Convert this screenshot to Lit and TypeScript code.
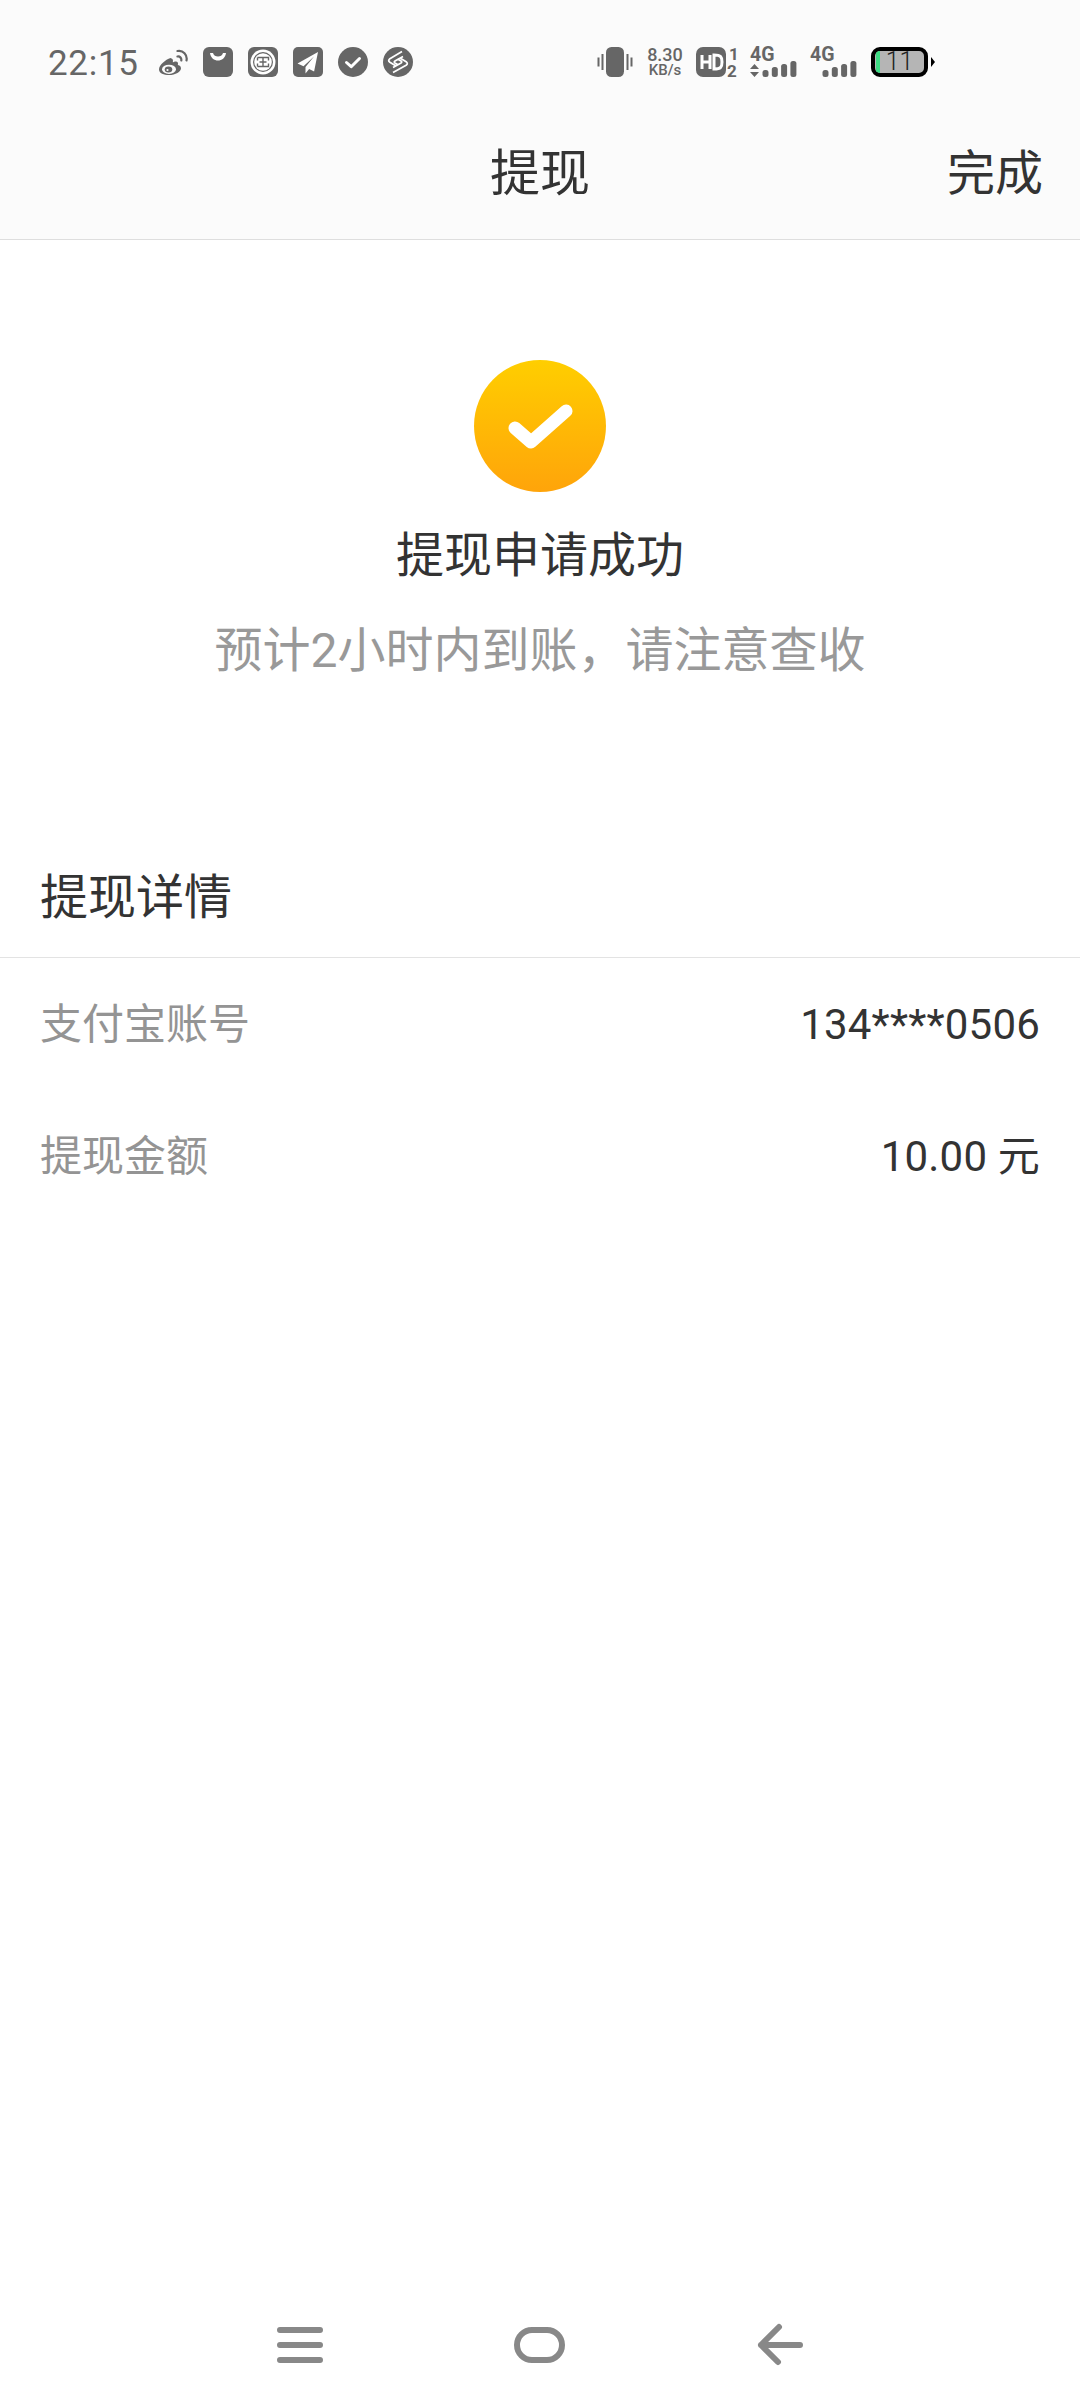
import { LitElement, html, css, svg } from "lit";
import { customElement } from "lit/decorators.js";

const G = "#666";

@customElement("app-root")
export class AppRoot extends LitElement {
  static styles = css`
    :host {
      display: flex;
      flex-direction: column;
      width: 1080px;
      height: 2408px;
      background: #fff;
      font-family: Roboto, "Noto Sans CJK SC", sans-serif;
      color: #333;
      overflow: hidden;
    }
    .head { background: #fbfbfb; height: 239px; border-bottom: 1px solid #dedede; flex: none; }
    .status { height: 120px; display: flex; align-items: center; padding: 4px 0 0 48px; box-sizing: border-box; }
    .time { font-size: 35px; color: #666; width: 110px; letter-spacing: 0.7px; line-height: 40px; margin-top: 3px; }
    .icons { display: flex; gap: 15px; align-items: center; margin-top: -1px; }
    .icons svg { display: block; width: 30px; height: 30px; }
    .sys { display: flex; align-items: center; margin-left: 184px; margin-top: -1px; height: 30px; }
    .sys svg { display: block; flex: none; overflow: visible; }
    .speed { width: 36px; margin-left: 14px; color: #666; display: flex; flex-direction: column; align-items: center; gap: 2px; line-height: 1; }
    .speed b { font-size: 18px; font-weight: 500; line-height: 15px; }
    .speed i { font-style: normal; font-size: 15px; font-weight: 500; line-height: 13px; }
    .sp-hd { margin-left: 13px; }
    .sp-4a { margin-left: 12px; }
    .sp-4b { margin-left: 13px; }
    .batt { display: flex; align-items: center; margin-left: 14px; flex: none; }
    .batt-box { position: relative; width: 57px; height: 30px; border: 4px solid #000; border-radius: 9px; box-sizing: border-box; background: #b5b5b5; overflow: hidden; display: flex; align-items: center; justify-content: center; font-size: 25px; font-weight: 300; color: #222; line-height: 1; }
    .batt-box::before { content: ""; position: absolute; left: 1px; top: 0; bottom: 0; width: 4px; background: #3ddc84; }
    .batt-tip { width: 0; height: 0; border-left: 4px solid #000; border-top: 5px solid transparent; border-bottom: 5px solid transparent; margin-left: 3px; }
    .title { height: 119px; display: grid; grid-template-columns: 1fr auto 1fr; align-items: center; line-height: 1; padding: 0 37px 12px 0; box-sizing: border-box; }
    .title span:first-child { grid-column: 2; margin-left: 37px; font-size: 50px; }
    .title .done { justify-self: end; font-size: 48px; }
    .result { display: flex; flex-direction: column; align-items: center; padding-top: 120px; }
    .result svg { display: block; width: 132px; height: 132px; }
    .r1 { font-size: 48px; line-height: 64px; margin-top: 32px; color: #333; }
    .r2 { font-size: 48px; line-height: 64px; margin-top: 31px; color: #999; }
    .detail { margin-top: 183px; }
    .d-title { font-size: 48px; line-height: 64px; padding: 0 40px 27px; color: #333; border-bottom: 1px solid #e3e3e3; }
    .rows { padding-top: 39px; display: flex; flex-direction: column; gap: 76px; }
    .row { display: flex; justify-content: space-between; align-items: center; padding: 0 40px; height: 56px; font-size: 42px; line-height: 56px; }
    .row .k { color: #949494; }
    .row .v { color: #333; letter-spacing: 0.2px; }
    .spacer { flex: 1; }
    .nav { height: 93px; flex: none; }
    .nav svg { display: block; width: 1080px; height: 60px; }
  `;

  private appIcons() {
    return html`
      <svg viewBox="0 0 30 30">
        <path fill="${G}" d="M12.500 11c-5 1.600-11.500 7-11.500 11.500 0 3.800 5 5.500 10 5.500 6.500 0 12-3.200 12-6.800 0-2.200-2.200-2.800-3.200-3.100 .8-2-.1-3.600-2-3.600-1.200 0-3 .8-3 .8s.6-2.200-.4-3.300c-.4-.4-1.300-.7-1.900-1z"/>
        <ellipse cx="11" cy="22.300" rx="7" ry="4.600" fill="#fbfbfb"/>
        <ellipse cx="10.500" cy="22.600" rx="3.800" ry="3" fill="${G}"/>
        <circle cx="9.500" cy="23" r="1.100" fill="#fbfbfb"/>
        <path fill="none" stroke="${G}" stroke-width="2.200" stroke-linecap="round" d="M19.500 9.500c2.200-.5 4.200 1.500 3.800 4M19.500 4c5.500-1.100 10.200 3.700 9 9.500"/>
      </svg>
      <svg viewBox="0 0 30 30">
        <rect width="30" height="30" rx="6" fill="${G}"/>
        <path d="M7 6h3c1 4.800 9 4.800 10 0h3c-1.200 10-14.800 10-16 0z" fill="#fff"/>
      </svg>
      <svg viewBox="0 0 30 30">
        <rect width="30" height="30" rx="6" fill="${G}"/>
        <circle cx="15" cy="15" r="12.500" fill="#fff"/>
        <circle cx="15" cy="15" r="10" fill="${G}"/>
        <circle cx="15" cy="15" r="8.800" fill="#fff"/>
        <path d="M9.500 10.500h11v3M9.500 10.500v3M15 10.500v9M11.500 15h7M9.500 19.500h11v-3M9.500 19.500v-3" stroke="${G}" stroke-width="1.400" fill="none"/>
      </svg>
      <svg viewBox="0 0 30 30">
        <rect width="30" height="30" rx="5" fill="${G}"/>
        <path d="M25 5 4.500 16.500l6 2.700L21 9.500 12.500 20v6.500l3.600-4.600 5 2.600z" fill="#fff"/>
      </svg>
      <svg viewBox="0 0 30 30">
        <circle cx="15" cy="15" r="15" fill="${G}"/>
        <path d="M8.500 15.500l4.700 4.200L21.500 11.500" fill="none" stroke="#fff" stroke-width="3" stroke-linecap="round" stroke-linejoin="round"/>
      </svg>
      <svg viewBox="0 0 30 30">
        <circle cx="15" cy="15" r="15" fill="${G}"/>
        <path d="M19 4.500 6.500 12Q5 13.500 6.500 15L13 19M20 9.500 12 14Q10.500 15 12 16L15.500 18M10 25.500 23.500 18Q25 16.500 23.500 15L17 11M10 20.500 18 16Q19.500 15 18 14L14.500 12" fill="none" stroke="#fff" stroke-width="1.700"/>
      </svg>
    `;
  }

  private signal(x: number) {
    const hs = [7, 10, 13, 16];
    return hs.map((h, i) => svg`<rect x="${x + i * 9.300}" y="${30 - h}" width="6" height="${h}" rx="2.500" fill="${G}"/>`);
  }

  render() {
    return html`
      <div class="head">
        <div class="status">
          <div class="time">22:15</div>
          <div class="icons">${this.appIcons()}</div>
          <div class="sys">
            <svg width="36" height="30" viewBox="0 0 36 30">
              <rect x="9" y="0" width="18" height="30" rx="5.500" fill="${G}"/>
              <path d="M1.500 10.500v9M5.500 7v16M30.500 7v16M34.500 10.500v9" stroke="${G}" stroke-width="2" fill="none"/>
            </svg>
            <div class="speed"><b>8.30</b><i>KB/s</i></div>
            <svg class="sp-hd" width="42" height="30" viewBox="0 0 42 30">
              <rect width="30" height="30" rx="7" fill="${G}"/>
              <path d="M6 8v14M14 8v14M6 15h8M18 8v14c7 0 8-2 8-7s-1-7-8-7z" fill="none" stroke="#fff" stroke-width="3"/>
              <text x="33" y="13" font-size="17" font-weight="700" fill="${G}" font-family="Roboto">1</text>
              <text x="31" y="30" font-size="17" font-weight="700" fill="${G}" font-family="Roboto">2</text>
            </svg>
            <svg class="sp-4a" width="47" height="30" viewBox="0 0 47 30">
              <text x="0" y="14" font-size="19.500" font-weight="700" fill="${G}" font-family="Roboto">4G</text>
              <path d="M0 22l4.500-5 4.500 5zM0 25l4.500 5 4.500-5z" fill="${G}"/>
              ${this.signal(12.5)}
            </svg>
            <svg class="sp-4b" width="47" height="30" viewBox="0 0 47 30">
              <text x="0" y="14" font-size="19.500" font-weight="700" fill="${G}" font-family="Roboto">4G</text>
              ${this.signal(12.5)}
            </svg>
            <div class="batt">
              <div class="batt-box">11</div>
              <div class="batt-tip"></div>
            </div>
          </div>
        </div>
        <div class="title"><span>提现</span><span class="done">完成</span></div>
      </div>
      <div class="result">
        <svg viewBox="0 0 132 132">
          <defs>
            <linearGradient id="g" x1="0" y1="0" x2="0" y2="1">
              <stop offset="0" stop-color="#ffce00"/>
              <stop offset="1" stop-color="#ffa40a"/>
            </linearGradient>
          </defs>
          <circle cx="66" cy="66" r="66" fill="url(#g)"/>
          <path d="M41 68 57 82 92 51" fill="none" stroke="#fff" stroke-width="13" stroke-linecap="round" stroke-linejoin="round"/>
        </svg>
        <div class="r1">提现申请成功</div>
        <div class="r2">预计2小时内到账，请注意查收</div>
      </div>
      <div class="detail">
        <div class="d-title">提现详情</div>
        <div class="rows">
          <div class="row"><span class="k">支付宝账号</span><span class="v">134****0506</span></div>
          <div class="row"><span class="k">提现金额</span><span class="v">10.00 元</span></div>
        </div>
      </div>
      <div class="spacer"></div>
      <div class="nav">
        <svg viewBox="0 0 1080 60">
          <g stroke="#888" stroke-width="6" stroke-linecap="round" stroke-linejoin="round" fill="none">
            <path d="M280 15h40M280 30h40M280 45h40"/>
            <rect x="517" y="15" width="45" height="30" rx="15"/>
            <path d="M800 30H761M779 12 761 30 778 47"/>
          </g>
        </svg>
      </div>
    `;
  }
}
